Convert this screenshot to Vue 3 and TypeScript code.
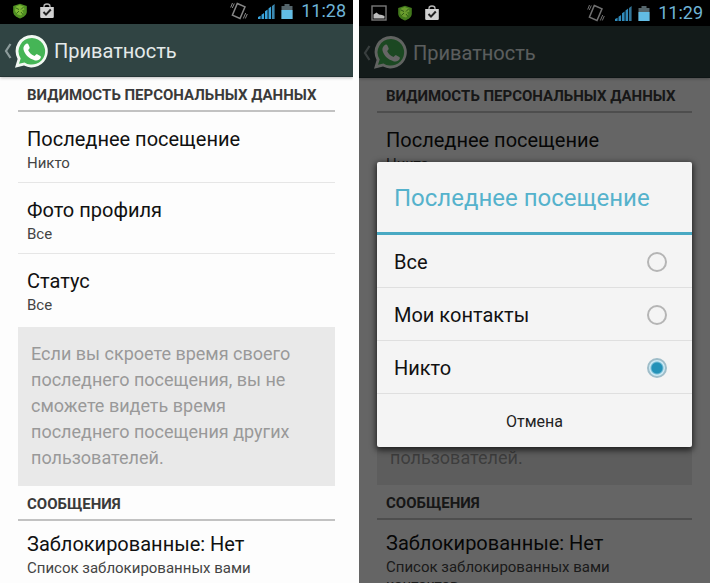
<script setup lang="ts">
import { ref } from 'vue'

interface Screen {
  id: string
  time: string
  dialog: boolean
}

interface Setting {
  title: string
  value: string
}

const screens: Screen[] = [
  { id: 'list', time: '11:28', dialog: false },
  { id: 'choice', time: '11:29', dialog: true },
]

const settings: Setting[] = [
  { title: 'Последнее посещение', value: 'Никто' },
  { title: 'Фото профиля', value: 'Все' },
  { title: 'Статус', value: 'Все' },
]

const options: string[] = ['Все', 'Мои контакты', 'Никто']
const selected = ref<string>('Никто')
</script>

<template>
  <main class="screens">
    <section
      v-for="screen in screens"
      :key="screen.id"
      class="phone"
      :class="{ dimmed: screen.dialog }"
    >
      <div class="status">
        <svg v-if="screen.dialog" class="picture" width="16" height="16" viewBox="0 0 16 16">
          <rect x="1" y="1" width="14" height="14" fill="none" stroke="#8d8d8d" stroke-width="1.4" />
          <path d="M2.5 13.5V9.5l3-2 2.5 2 3 .5 2.5 1v2.500z" fill="#dedede" />
        </svg>
        <svg class="shield" width="16" height="16" viewBox="0 0 16 16">
          <path d="M8 .8 14.800 3v5.500c0 3.500-3 5.800-6.800 6.900C4.200 14.300 1.200 12 1.200 8.500V3z" fill="#4f8f22" />
          <path d="M4 3.500 7.500 2l4 1.500 1 3-2.500 1 1.500 2.500-2.500 2.500-3.500-1L3 8z" fill="#7db836" />
          <path d="m4 5 3 1.500M11.500 4 9 6.500M7 8l-2.500 2.500M9 9l2 2.500" stroke="#35651a" stroke-width="1" fill="none" />
        </svg>
        <svg class="bag" width="16" height="16" viewBox="0 0 16 16">
          <path d="M5 4.500V3.200Q5 1 8 1t3 2.200v1.300" fill="none" stroke="#b4b4b4" stroke-width="1.300" />
          <path d="M1.200 4h13.600v9.800q0 1.200-1.200 1.200H2.400q-1.200 0-1.200-1.200z" fill="#d2d2d2" />
          <path d="m4.500 9 2.500 2.600L11.800 6.500" fill="none" stroke="#222" stroke-width="2" />
        </svg>
        <span class="spacer"></span>
        <svg class="vibrate" width="18" height="20" viewBox="0 0 18 20">
          <g fill="none" stroke="#858585">
            <path d="m7.300 2.500 7.700 3.400-5 11.600-7.600-3.400z" stroke-width="1.500" />
            <path d="M4.300 2.500 2.300 7M2.500 2 .7 6.500M15.700 12l-2.400 5.500M17.300 13l-2 4.500" stroke-width="1" />
          </g>
        </svg>
        <svg class="signal" width="17" height="17" viewBox="0 0 17 17">
          <path d="M0 16v-2l2.600-1.200V16zM3.500 16v-4.300L6.100 10v6zM7 16V8.300l2.600-1.800V16zM10.500 16V5.500l2.600-2V16z" fill="#39a4dc" />
          <path d="M14 16V3l2.600-2v15z" fill="#3c88b0" />
        </svg>
        <svg class="battery" width="12" height="17" viewBox="0 0 12 17">
          <path d="M3.500 1h5v2H11.500v13H.5V3h3z" fill="#55656b" />
          <path d="M.5 7h11v9H.5z" fill="#62bce4" />
        </svg>
        <time class="clock">{{ screen.time }}</time>
      </div>

      <div class="body">
        <header class="bar">
          <button class="back" type="button" aria-label="Назад">
            <svg width="8" height="18" viewBox="0 0 8 18">
              <path d="M6.500 2 2 9l4.500 7" fill="none" stroke="#8d9c9c" stroke-width="2.200" />
            </svg>
            <svg width="35" height="35" viewBox="0 0 35 35">
              <path d="M18 1a16.200 16.200 0 1 1-8 30.500L1 33.800 3.600 25A16.200 16.200 0 0 1 18 1z" fill="#f2f8f2" />
              <path d="M18 4a13.300 13.300 0 1 1-7.500 24.400L5 29.800l1.700-5.300A13.300 13.300 0 0 1 18 4z" fill="#45b556" />
              <path d="M12.300 9.700c.8-.5 1.600-.3 2 .6l1.300 3c.3.800-.2 1.500-1.500 2.800 1.400 2.900 3.500 4.900 6.500 6 1.300-1.700 1.700-2.200 2.500-1.800l3.200 1.700c.8.400.6 1.400.3 2.100-.8 2-3.400 2.900-5.600 2.300-6-1.600-10.300-5.800-11.500-10.800-.5-2.500.8-4.900 2.800-5.900z" fill="#fff" />
            </svg>
          </button>
          <h1>Приватность</h1>
        </header>

        <div class="content">
          <h2>ВИДИМОСТЬ ПЕРСОНАЛЬНЫХ ДАННЫХ</h2>
          <div class="rows">
            <button v-for="item in settings" :key="item.title" type="button" class="row">
              <span class="title">{{ item.title }}</span>
              <span class="value">{{ item.value }}</span>
            </button>
          </div>
          <p class="note">
            Если вы скроете время своего последнего посещения, вы не сможете видеть время последнего
            посещения других пользователей.
          </p>
          <h2>СООБЩЕНИЯ</h2>
          <button type="button" class="row blocked">
            <span class="title">Заблокированные: Нет</span>
            <span class="value">Список заблокированных вами контактов.</span>
          </button>
        </div>

        <div v-if="screen.dialog" class="overlay">
          <form class="dialog" role="dialog" aria-labelledby="dialog-title" @submit.prevent>
            <h3 id="dialog-title">Последнее посещение</h3>
            <label v-for="option in options" :key="option" class="option">
              <span>{{ option }}</span>
              <input v-model="selected" type="radio" name="last-seen" :value="option" />
            </label>
            <button type="button" class="cancel">Отмена</button>
          </form>
        </div>
      </div>
    </section>
  </main>
</template>

<style>
body {
  margin: 0;
  background: #fdfdfd;
}
</style>

<style scoped>
.screens {
  display: grid;
  grid-template-columns: 353fr 351fr;
  gap: 6px;
  height: 100vh;
  overflow: hidden;
  font-family: Roboto, 'Liberation Sans', sans-serif;
  color: #111;
}

.phone {
  display: flex;
  flex-direction: column;
  min-width: 0;
  min-height: 0;
}

.status {
  display: flex;
  align-items: center;
  flex: none;
  height: 24px;
  padding: 0 7px 2px 12px;
  box-sizing: border-box;
  background: #000;
}

.dimmed .status {
  height: 26px;
  padding-bottom: 0;
}

.status svg {
  flex: none;
}

.picture {
  margin-right: 10px;
}

.shield {
  margin-right: 11px;
}

.spacer {
  flex: 1;
}

.vibrate {
  margin-right: 10px;
}

.signal {
  margin-right: 6px;
}

.battery {
  margin-right: 8px;
}

.clock {
  font-size: 18px;
  line-height: 22px;
  color: #6fb4d6;
}

.dimmed .vibrate,
.dimmed .signal,
.dimmed .shield,
.dimmed .picture {
  opacity: 0.85;
}

.body {
  position: relative;
  flex: 1;
  min-height: 0;
  overflow: hidden;
}

.bar {
  display: flex;
  align-items: center;
  height: 53px;
  padding: 2px 0 0 4px;
  box-sizing: border-box;
  background: #304443;
  border-bottom: 1px solid #253535;
  box-shadow: 0 1px 3px #bbb;
}

.back {
  display: flex;
  align-items: center;
  gap: 2px;
  margin: 0 5px 0 0;
  padding: 0;
  border: 0;
  background: none;
}

h1 {
  margin: 0;
  font-size: 20px;
  font-weight: 400;
  line-height: 24px;
  color: #e4eaea;
}

.content {
  padding: 0 18px;
}

h2 {
  margin: 0;
  padding: 9px 9px 6px;
  border-bottom: 2px solid #c2c2c2;
  font-size: 15px;
  font-weight: 700;
  line-height: 18px;
  color: #3a3a3a;
}

.row {
  display: flex;
  flex-direction: column;
  gap: 2px;
  width: 100%;
  padding: 14px 9px 10px;
  border: 0;
  border-bottom: 1px solid #e6e6e6;
  background: none;
  font: inherit;
  text-align: left;
  color: #111;
}

.rows .row:last-child {
  border-bottom-color: transparent;
}

.row.blocked {
  padding-top: 10px;
}

.title {
  font-size: 20px;
  line-height: 26px;
}

.value {
  max-width: 260px;
  font-size: 15px;
  line-height: 18px;
  color: #444;
}

.note {
  margin: 2px 0 0;
  padding: 14px 32px 15px 13px;
  background: #e9e9e9;
  font-size: 18px;
  line-height: 26px;
  color: #999;
}

.dimmed .bar {
  height: 52px;
}

.dimmed .note {
  padding: 13px 32px 14px 13px;
}

.overlay {
  position: absolute;
  inset: 0;
  display: flex;
  align-items: center;
  padding: 0 18px;
  background: rgba(0, 0, 0, 0.6);
}

.dialog {
  flex: 1;
  border-radius: 2px;
  background: #f4f4f4;
  box-shadow: 0 2px 6px 1px rgba(0, 0, 0, 0.7);
}

h3 {
  margin: 0;
  padding: 21px 17px 19px;
  border-bottom: 3px solid #49a9c3;
  font-size: 24px;
  font-weight: 400;
  line-height: 30px;
  color: #55b2cc;
}

.option {
  display: flex;
  align-items: center;
  justify-content: space-between;
  height: 53px;
  padding: 1px 25px 0 17px;
  box-sizing: border-box;
  border-bottom: 1px solid #dfdfdf;
  font-size: 20px;
  line-height: 24px;
}

.option input {
  appearance: none;
  width: 20px;
  height: 20px;
  margin: 0;
  border: 2px solid #b5b5b5;
  border-radius: 50%;
}

.option input:checked {
  border-color: #9fbdc9;
  background: radial-gradient(circle, #2492b8 5px, #cdeaf5 7px);
}

.cancel {
  display: block;
  width: 100%;
  height: 53px;
  padding: 2px 0 0;
  border: 0;
  background: none;
  font: inherit;
  font-size: 16px;
  color: #222;
}
</style>
